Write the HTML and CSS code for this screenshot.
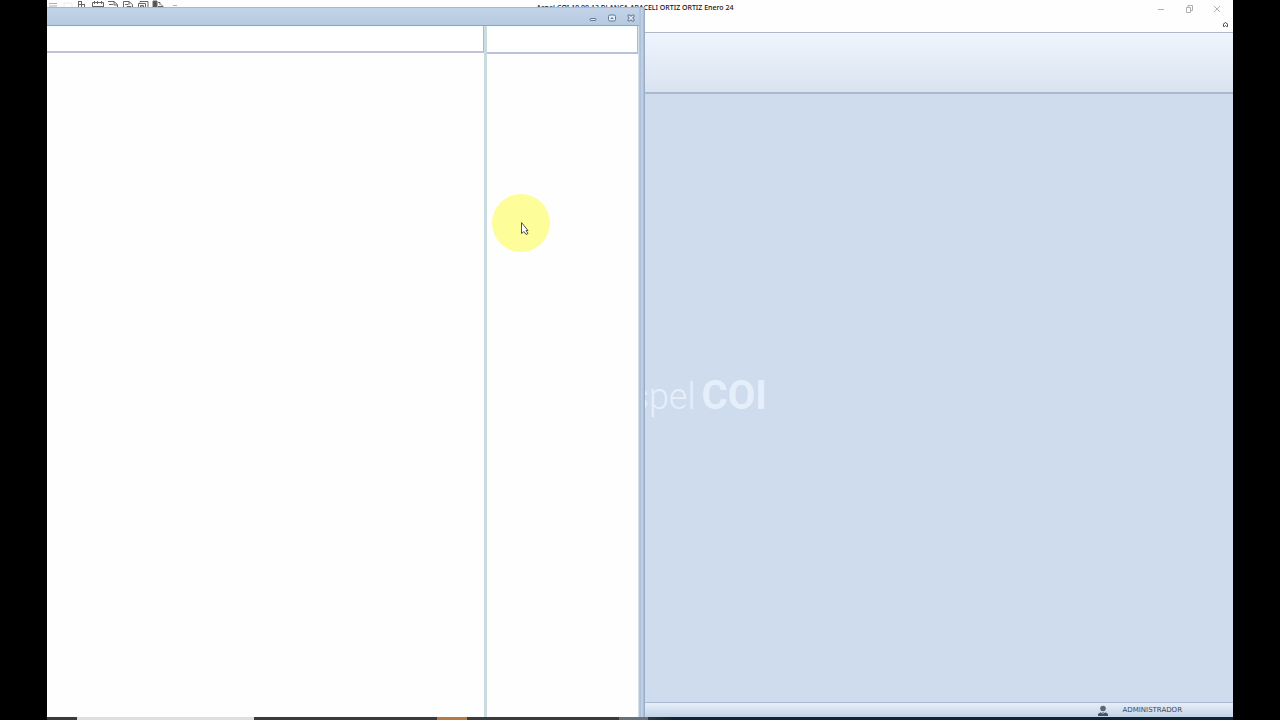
FILE: index.html
```html
<!DOCTYPE html>
<html lang="es">
  <head>
    <meta charset="UTF-8" />
    <meta name="viewport" content="width=device-width, initial-scale=1.0" />
    <title>Aspel COI</title>
    <link rel="stylesheet" href="styles.css">
  </head>
  <body>
    <div class="screen">
      <div class="app">
        <header class="app-header">
          <div class="quick-access">
            <button type="button" aria-label="Menú" class="faded"><svg width="12" height="12" viewBox="0 0 12 12"><path d="M2 3.500h8M2 6h8M2 9h8" /></svg></button>
            <button type="button" aria-label="Nuevo" class="faint"><svg width="12" height="12" viewBox="0 0 12 12"><path d="M2 3h8v7H2z" /></svg></button>
            <button type="button" aria-label="Catálogo"><svg width="12" height="12" viewBox="0 0 12 12"><path d="M1.500 1v9M4.500 1v9M7.500 4v4M1 1.500h4M1 4.500h7M1 7.500h8v3H1" /></svg></button>
            <button type="button" aria-label="Pólizas"><svg width="12" height="12" viewBox="0 0 12 12"><path d="M.5 2.500h11v8H.5zM2.500 1v3M9.500 1v3M1 6.500h10M5.500 1v3" /></svg></button>
            <button type="button" aria-label="Reportes"><svg width="12" height="12" viewBox="0 0 12 12"><path d="M1 1.500h6l3.500 3v6H1M7 2v3h3M2 4.500h4M2 7.500h6" /></svg></button>
            <button type="button" aria-label="Consultas"><svg width="12" height="12" viewBox="0 0 12 12"><path d="M1.500 10V1.500H7l3.500 3v6M7 2v3M3 4.500h3M5 6.500h4v3H5z" /></svg></button>
            <button type="button" aria-label="Bancos"><svg width="12" height="12" viewBox="0 0 12 12"><path d="M1.500 10V3.500h7V10M3 2.500V1.500h8V9M3.500 9V5.500h3V9M4 7h3" /></svg></button>
            <button type="button" aria-label="Salir"><svg width="12" height="12" viewBox="0 0 12 12"><path d="M1 1h4v10H1z" fill="#555" /><path d="M6 2.500h2V5M6 6.500h5M9 4.500l2 2-2 2" /></svg></button>
            <button type="button" aria-label="Personalizar" class="faded"><svg width="12" height="12" viewBox="0 0 12 12"><path d="M6 5.500h4" /></svg></button>
          </div>
          <h1 class="app-title">Aspel-COI 10.00.13 BLANCA ARACELI ORTIZ ORTIZ Enero 24</h1>
          <div class="app-tools">
            <div class="app-controls">
              <button type="button" aria-label="Minimizar"><svg width="8" height="8" viewBox="0 0 8 8"><path d="M1 4.500h6" /></svg></button>
              <button type="button" aria-label="Restaurar"><svg width="8" height="8" viewBox="0 0 8 8"><path d="M1.500 2.500h4v5h-4zM3 2V.5h4.500v5H6" /></svg></button>
              <button type="button" aria-label="Cerrar"><svg width="8" height="8" viewBox="0 0 8 8"><path d="M1 1l6 6M7 1L1 7" /></svg></button>
            </div>
            <button type="button" class="collapse" aria-label="Contraer"><svg width="7" height="6" viewBox="0 0 7 6"><path d="M1 3.500l2.500-2 2.500 2M1.500 3.500v2h1l1-1 1 1h1v-2" /></svg></button>
          </div>
        </header>
        <div class="ribbon"></div>
        <main class="workspace">
          <div class="brand"><span class="brand-light">aspel</span><span class="brand-bold">COI</span></div>
        </main>
        <footer class="status">
          <svg width="10" height="11" viewBox="0 0 10 11"><circle cx="5" cy="3.500" r="2.800" fill="#5c6775" /><path d="M0 11V9l3-2h4l3 2v2z" fill="#465365" /><path d="M2.500 7.200l2.500 1 2.500-1" stroke="#c8d3e2" fill="none" /></svg>
          <span>ADMINISTRADOR</span>
        </footer>

        <section class="window">
          <div class="window-bar">
            <button type="button" aria-label="Minimizar"><svg width="10" height="10" viewBox="0 0 10 10"><rect x="2" y="5.500" width="6" height="2" rx="1" /></svg></button>
            <button type="button" aria-label="Maximizar"><svg width="10" height="10" viewBox="0 0 10 10"><rect x="1.500" y="2" width="7" height="6" rx="1.500" /><path d="M4 5.500l1-1 1 1z" /></svg></button>
            <button type="button" aria-label="Cerrar"><svg width="10" height="10" viewBox="0 0 10 10"><path d="M2 2h2l1 1.500L6 2h2v2L6.500 5 8 6v2H6L5 6.500 4 8H2V6l1.500-1L2 4z" /></svg></button>
          </div>
          <div class="window-body">
            <div class="pane pane-main"><div class="pane-head"></div></div>
            <div class="splitter"></div>
            <div class="pane pane-side"><div class="pane-head"></div></div>
          </div>
        </section>

        <svg class="pointer" width="60" height="60" viewBox="0 0 60 60">
          <circle cx="30" cy="30" r="29" fill="#fdfd9a" />
          <path d="M30.500 29.500v11l2.500-2 2 3 2-1-2-3h2z" fill="#fff" stroke="#555147" />
        </svg>
      </div>
      <div class="taskbar">
        <div class="task-search"></div>
        <div class="task-active"></div>
        <div class="task-end"></div>
      </div>
    </div>
  </body>
</html>
```

FILE: styles.css
```css
* {
  box-sizing: border-box;
}
body {
  margin: 0;
  background-color: #000;
  font-family: "Noto Sans", sans-serif;
}
button {
  display: flex;
  padding: 0;
  border: none;
  background: none;
}
.screen {
  display: flex;
  flex-direction: column;
  height: 100vh;
  margin: 0 47px;
}
.app {
  position: relative;
  display: flex;
  flex: 1;
  flex-direction: column;
  overflow: hidden;
  background-color: #cfdcee;
}

/* main title bar */
.app-header {
  display: grid;
  grid-template-columns: 1fr auto 1fr;
  height: 33px;
  border-bottom: 1px solid #b0b9c9;
  background-color: #fefefe;
}
.quick-access {
  display: flex;
  gap: 3px;
}
.quick-access svg {
  fill: none;
  stroke: #666;
}
.faded {
  opacity: 0.5;
}
.faint {
  opacity: 0.1;
}
.app-title {
  margin: 0;
  padding-right: 10px;
  color: #111;
  font-size: 7px;
  font-weight: 500;
  line-height: 15px;
}
.app-tools {
  display: flex;
  flex-direction: column;
  align-items: flex-end;
  gap: 8px;
  padding: 5px 4px 0 0;
}
.app-controls {
  display: flex;
  gap: 20px;
  padding-right: 8px;
}
.app-controls svg {
  fill: none;
  stroke: #b0b0b0;
}
.collapse svg {
  fill: none;
  stroke: #444;
}
.ribbon {
  height: 61px;
  border-bottom: 2px solid #abb9cf;
  background: linear-gradient(#eff5fe, #d9e3f0);
}

/* workspace with the product name */
.workspace {
  display: flex;
  flex: 1;
  align-items: center;
  justify-content: center;
}
.brand {
  display: flex;
  align-items: baseline;
  justify-content: flex-end;
  gap: 6px;
  width: 254px;
  padding-bottom: 4px;
  color: #e5effb;
  font-family: Roboto, sans-serif;
  line-height: 48px;
}
.brand-light {
  font-size: 36px;
  font-weight: 300;
}
.brand-bold {
  font-size: 40px;
  font-weight: 700;
}
.status {
  display: flex;
  align-items: center;
  justify-content: flex-end;
  gap: 15px;
  height: 15px;
  padding-right: 51px;
  border-top: 1px solid #aab9d0;
  background: linear-gradient(#e6eef9, #c3d3e7);
  color: #3c4858;
  font-family: "DejaVu Sans", sans-serif;
  font-size: 7px;
}

/* document window over the workspace */
.window {
  position: absolute;
  top: 7px;
  bottom: 0;
  left: 0;
  display: flex;
  flex-direction: column;
  width: calc(50% + 5px);
  padding-right: 6px;
  border-top: 1px solid #a9b9cc;
  background: linear-gradient(90deg, #bfd0e5 0 calc(100% - 6px), #a9bbd1 calc(100% - 5px), #c6d6eb calc(100% - 3px), #91a6c3);
}
.window-bar {
  display: flex;
  align-items: center;
  justify-content: flex-end;
  gap: 9px;
  height: 18px;
  padding: 3px 3px 0 0;
  border-bottom: 1px solid #8ba5bd;
  background: linear-gradient(#c4d4e8, #b5cae0);
}
.window-bar svg {
  fill: #e4edf7;
  stroke: #627993;
}
.window-body {
  display: flex;
  flex: 1;
}
.pane {
  background-color: #fefefe;
}
.pane-main {
  flex: 1;
}
.pane-side {
  width: 152px;
  border-right: 1px solid #d3e0ec;
}
.pane-head {
  height: 27px;
  border-right: 1px solid #b5b9cb;
  border-bottom: 2px solid #c5c1d3;
  background: linear-gradient(#f4fdff, #fff 4px);
}
.pane-side .pane-head {
  height: 28px;
  border-bottom-color: #b9c2d6;
}
.splitter {
  width: 3px;
  background-color: #cbdce1;
}

.pointer {
  position: absolute;
  top: 193px;
  left: 444px;
}

/* strip of the system taskbar */
.taskbar {
  display: flex;
  height: 3px;
  background: linear-gradient(90deg, #3b3b3d 50%, #0c2436 53%);
}
.task-search {
  width: 177px;
  margin-left: 30px;
  background-color: #dedede;
}
.task-active {
  width: 30px;
  margin-left: 183px;
  background-color: #b77942;
}
.task-end {
  width: 29px;
  margin-left: 152px;
  background-color: #67717a;
}
```
